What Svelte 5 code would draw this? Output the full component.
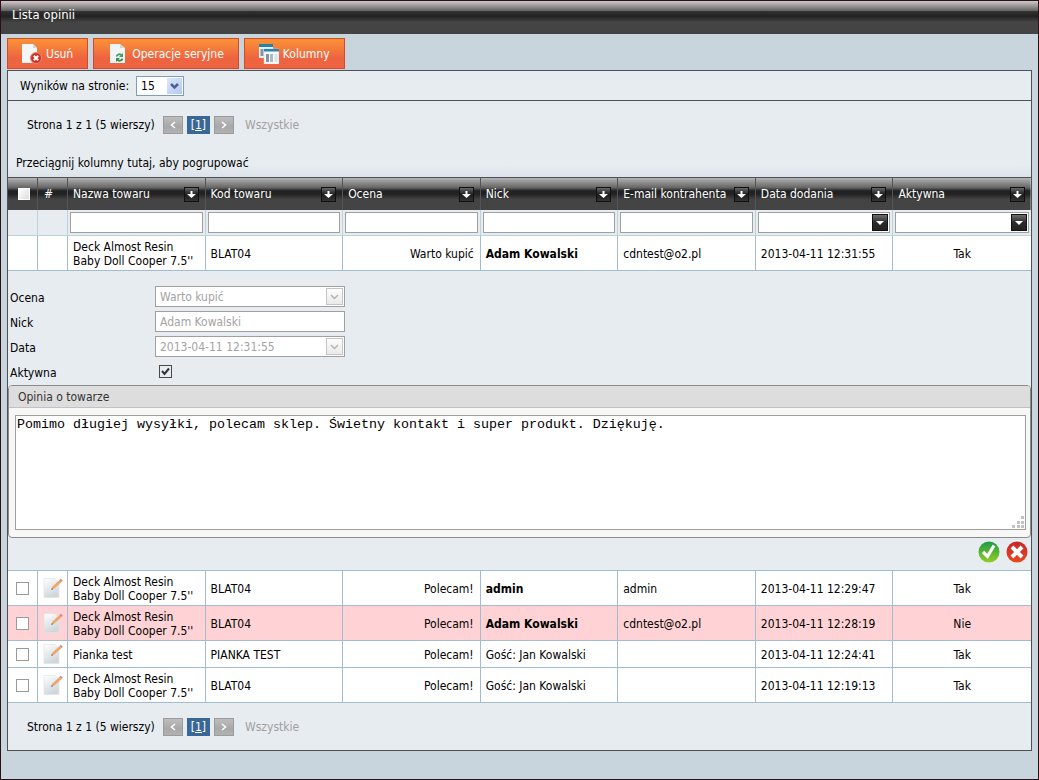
<script lang="ts">
  type Review = {
    id: number;
    product: string;
    code: string;
    rating: string;
    nick: string;
    registered: boolean;
    email: string;
    date: string;
    active: boolean;
  };

  const product = "Deck Almost Resin Baby Doll Cooper 7.5''";

  const reviews: Review[] = [
    { id: 1, product, code: 'BLAT04', rating: 'Warto kupić', nick: 'Adam Kowalski', registered: true, email: 'cdntest@o2.pl', date: '2013-04-11 12:31:55', active: true },
    { id: 2, product, code: 'BLAT04', rating: 'Polecam!', nick: 'admin', registered: true, email: 'admin', date: '2013-04-11 12:29:47', active: true },
    { id: 3, product, code: 'BLAT04', rating: 'Polecam!', nick: 'Adam Kowalski', registered: true, email: 'cdntest@o2.pl', date: '2013-04-11 12:28:19', active: false },
    { id: 4, product: 'Pianka test', code: 'PIANKA TEST', rating: 'Polecam!', nick: 'Gość: Jan Kowalski', registered: false, email: '', date: '2013-04-11 12:24:41', active: true },
    { id: 5, product, code: 'BLAT04', rating: 'Polecam!', nick: 'Gość: Jan Kowalski', registered: false, email: '', date: '2013-04-11 12:19:13', active: true },
  ];

  const columns = [
    { key: 'product', label: 'Nazwa towaru', filter: 'text' },
    { key: 'code', label: 'Kod towaru', filter: 'text' },
    { key: 'rating', label: 'Ocena', filter: 'text' },
    { key: 'nick', label: 'Nick', filter: 'text' },
    { key: 'email', label: 'E-mail kontrahenta', filter: 'text' },
    { key: 'date', label: 'Data dodania', filter: 'list' },
    { key: 'active', label: 'Aktywna', filter: 'list' },
  ];

  let editedId = $state<number | null>(1);
  let selected = $state<number[]>([]);
  let pageSize = $state('15');
  let opinion = $state('Pomimo długiej wysyłki, polecam sklep. Świetny kontakt i super produkt. Dziękuję.');

  function close() {
    editedId = null;
  }
</script>

{#snippet pager()}
  <nav class="pager">
    <span class="summary">Strona 1 z 1 (5 wierszy)</span>
    <button class="step" disabled aria-label="Poprzednia">
      <svg width="8" height="8" viewBox="0 0 8 8"><path d="M6 1 2.5 4 6 7" /></svg>
    </button>
    <a class="current" href="#1">[1]</a>
    <button class="step" disabled aria-label="Następna">
      <svg width="8" height="8" viewBox="0 0 8 8"><path d="M2 1 5.5 4 2 7" /></svg>
    </button>
    <span class="all">Wszystkie</span>
  </nav>
{/snippet}

<main class="window">
  <h1>Lista opinii</h1>

  <div class="toolbar">
    <button>
      <svg width="20" height="20" viewBox="0 0 20 20">
        <path d="M0 0h11l4 4v15H0z" fill="#f4f6f6" />
        <path d="M11 0v4h4z" fill="#cfd5d8" />
        <circle cx="14" cy="14" r="5.5" fill="#cf3425" stroke="#e8877c" />
        <path d="m11.8 11.8 4.4 4.4m0-4.4-4.4 4.4" stroke="#fff" stroke-width="2" />
      </svg>
      Usuń
    </button>
    <button>
      <svg width="20" height="20" viewBox="0 0 20 20">
        <path d="M2 0h10l5 4v15H2z" fill="#f1f4f4" />
        <path d="M12 0v4h5z" fill="#cfd5d8" />
        <path d="M8.5 12.5c.6-2.6 4-3 5.3-1" fill="none" stroke="#4c9a63" stroke-width="1.8" />
        <path d="M15 9v4h-4z" fill="#4c9a63" />
        <path d="M14.5 14.5c-.6 2.6-4 3-5.3 1" fill="none" stroke="#3a8a55" stroke-width="1.8" />
        <path d="M8 18v-4h4z" fill="#3a8a55" />
      </svg>
      Operacje seryjne
    </button>
    <button>
      <svg width="20" height="20" viewBox="0 0 20 20">
        <path d="M0 0h14v14H0z" fill="#e9eff4" />
        <path d="M0 0h14v3H0z" fill="#2481ae" />
        <path d="M1.5 5h3v7h-3zM6 5h2v7H6z" fill="#8297a5" />
        <path d="M5 5h15v15H5z" fill="#f7fafc" stroke="#c3d0d8" stroke-width=".5" />
        <path d="M5 5h15v2.5H5z" fill="#2786b4" />
        <path d="M7 10h3v8H7z" fill="#8495a2" />
        <path d="M11 10h3v8h-3z" fill="#adbac3" />
        <path d="M15.5 10h3v8h-3z" fill="#dbe2e7" />
      </svg>
      Kolumny
    </button>
  </div>

  <section class="panel">
    <div class="page-size">
      <label for="page-size">Wyników na stronie:</label>
      <span class="combo blue">
        <select id="page-size" bind:value={pageSize}>
          <option>15</option>
          <option>30</option>
          <option>50</option>
        </select>
        <svg class="knob" width="15" height="16" viewBox="0 0 15 16"><path d="m4 6 3.5 3.5L11 6" /></svg>
      </span>
    </div>

    {@render pager()}
    <p class="group-hint">Przeciągnij kolumny tutaj, aby pogrupować</p>

    <table>
      <colgroup>
        <col class="narrow" />
        <col class="narrow" />
        {#each columns as column (column.key)}<col />{/each}
      </colgroup>
      <thead>
        <tr class="head">
          <th><input class="check-all" type="checkbox" aria-label="Zaznacz wszystkie" /></th>
          <th class="hash">#</th>
          {#each columns as column (column.key)}
            <th>
              <div class="head-cell">
                <span>{column.label}</span>
                <button class="filter-menu" aria-label="Filtruj: {column.label}">
                  <svg width="9" height="9" viewBox="0 0 9 9"><path d="M3.500 1h2v3H9L4.500 8 0 4h3.500z" /></svg>
                </button>
              </div>
            </th>
          {/each}
        </tr>
        <tr class="filters">
          <td></td>
          <td></td>
          {#each columns as column (column.key)}
            <td>
              {#if column.filter === 'text'}
                <input class="field" type="text" aria-label={column.label} />
              {:else}
                <span class="combo dark">
                  <select aria-label={column.label}><option></option></select>
                  <svg class="knob" width="16" height="17" viewBox="0 0 16 17"><path d="M4 7h8l-4 4z" /></svg>
                </span>
              {/if}
            </td>
          {/each}
        </tr>
      </thead>
      <tbody>
        {#each reviews as review (review.id)}
          {@const edited = review.id === editedId}
          <tr class="row" class:inactive={!review.active}>
            <td class="icon">
              {#if !edited}
                <input type="checkbox" value={review.id} bind:group={selected} aria-label="Zaznacz opinię {review.id}" />
              {/if}
            </td>
            <td class="icon">
              {#if !edited}
                <button class="plain" aria-label="Edytuj" onclick={() => (editedId = review.id)}>
                  <svg width="20" height="20" viewBox="0 0 20 20">
                    <defs>
                      <linearGradient id="sheet-{review.id}" x2="0.4" y2="1">
                        <stop offset="0" stop-color="#fff" />
                        <stop offset="1" stop-color="#d0d7db" />
                      </linearGradient>
                    </defs>
                    <path d="M1 .5h11l4 4v15H1z" fill="url(#sheet-{review.id})" stroke="#e0e4e6" stroke-width=".7" />
                    <path d="m8.5 11.500 1-3 7-6.500 2 2-7 6.500z" fill="#eea669" />
                    <path d="m16.5 2 1.3-1.2 2 2-1.3 1.2z" fill="#cd8290" />
                    <path d="m8.3 11.8.6-1.8 1.300 1.200z" fill="#555" />
                  </svg>
                </button>
              {/if}
            </td>
            <td>{review.product}</td>
            <td>{review.code}</td>
            <td class="right">{review.rating}</td>
            <td class:bold={review.registered}>{review.nick}</td>
            <td>{review.email}</td>
            <td>{review.date}</td>
            <td class="center">{review.active ? 'Tak' : 'Nie'}</td>
          </tr>
          {#if edited}
            <tr class="details">
              <td colspan="9">
                <div class="form">
                  <label for="rating">Ocena</label>
                  <span class="combo grey">
                    <select id="rating" disabled><option>{review.rating}</option></select>
                    <svg class="knob" width="17" height="17" viewBox="0 0 17 17"><path d="m5 7 3.5 3.5L12 7" /></svg>
                  </span>
                  <label for="nick">Nick</label>
                  <input id="nick" class="field" type="text" value={review.nick} disabled />
                  <label for="date">Data</label>
                  <span class="combo grey">
                    <select id="date" disabled><option>{review.date}</option></select>
                    <svg class="knob" width="17" height="17" viewBox="0 0 17 17"><path d="m5 7 3.5 3.5L12 7" /></svg>
                  </span>
                  <label for="active">Aktywna</label>
                  <input id="active" type="checkbox" checked={review.active} />
                </div>
                <div class="opinion">
                  <label for="opinion">Opinia o towarze</label>
                  <div class="opinion-body">
                    <textarea id="opinion" bind:value={opinion}></textarea>
                    <svg class="grip" width="12" height="12" viewBox="0 0 12 12">
                      <path d="M9 0h3v3H9zM5 5h3v3H5zM9 5h3v3H9zM0 9h3v3H0zM5 9h3v3H5zM9 9h3v3H9z" />
                    </svg>
                  </div>
                </div>
                <div class="actions">
                  <button class="plain" aria-label="Zapisz" onclick={close}>
                    <svg width="22" height="22" viewBox="0 0 22 22">
                      <defs>
                        <linearGradient id="ok" x2="0" y2="1">
                          <stop offset="0" stop-color="#1d9a47" />
                          <stop offset="1" stop-color="#93cd25" />
                        </linearGradient>
                      </defs>
                      <circle cx="11" cy="11" r="10.5" fill="url(#ok)" />
                      <path d="m5 11 4.5 4.5 6.5-11" fill="none" stroke="#fff" stroke-width="3.2" />
                    </svg>
                  </button>
                  <button class="plain" aria-label="Anuluj" onclick={close}>
                    <svg width="22" height="22" viewBox="0 0 22 22">
                      <defs>
                        <linearGradient id="cancel" x2="0" y2="1">
                          <stop offset="0" stop-color="#c5262b" />
                          <stop offset="1" stop-color="#ea4a1c" />
                        </linearGradient>
                      </defs>
                      <circle cx="11" cy="11" r="10.5" fill="url(#cancel)" />
                      <path d="m6 6 10 10M16 6 6 16" stroke="#fff" stroke-width="4" />
                    </svg>
                  </button>
                </div>
              </td>
            </tr>
          {/if}
        {/each}
      </tbody>
    </table>

    {@render pager()}
  </section>
</main>

<style>
  :global(body) {
    background: #c8d5dc;
  }

  .window {
    box-sizing: border-box;
    min-height: 100vh;
    border: 1px solid #2c1015;
    background: #c8d5dc;
    color: #000;
    font: 12px/14px 'DejaVu Sans Condensed', Tahoma, sans-serif;
  }
  .window * { box-sizing: border-box; }

  button, input, select { font: inherit; }
  svg { display: block; }

  h1 {
    margin: 0;
    padding: 6px 11px 11px;
    background: linear-gradient(#cfc8cb, #666 29%, #303030 32%, #222 46%, #444 64%, #444);
    color: #fff;
    font-size: 13px;
    font-weight: normal;
    line-height: 16px;
  }

  .toolbar {
    display: flex;
    gap: 5px;
    padding: 4px 6px 1px;
  }
  .toolbar button {
    display: flex;
    align-items: center;
    gap: 4px;
    height: 31px;
    padding: 0 14px;
    border: 1px solid #d4482b;
    background: linear-gradient(#fb9336, #ee6440 65%);
    color: #fff;
  }

  .panel {
    margin: 0 6px 28px;
    border: 1px solid #4e5156;
    background: #e7ecf0;
  }

  .page-size {
    display: flex;
    align-items: center;
    gap: 7px;
    height: 30px;
    padding-left: 12px;
    border-bottom: 1px solid #4e5156;
  }

  .pager {
    display: flex;
    align-items: center;
    gap: 4px;
    height: 47px;
    padding-left: 19px;
  }
  .summary { padding-right: 4px; }
  .step {
    display: grid;
    place-items: center;
    width: 20px;
    height: 18px;
    padding: 0;
    border: 1px solid #9b9b9b;
    background: linear-gradient(#bdbdbd, #a8a8a8 60%, #b2b2b2);
  }
  .step path {
    fill: none;
    stroke: #fff;
    stroke-width: 1.5;
  }
  .current {
    padding: 2px 4px;
    background: #3a6896;
    color: #fff;
  }
  .all {
    margin-left: 7px;
    color: #a0a0a0;
  }

  .group-hint {
    margin: 0;
    padding: 8px 8px 7px;
    background: linear-gradient(#e7ecf0 60%, #dbe3ea);
  }

  table {
    width: 100%;
    border-spacing: 0;
    table-layout: fixed;
  }
  .narrow { width: 30px; }
  th, td {
    padding: 0;
    border-right: 1px solid #a2bdd0;
    border-bottom: 1px solid #a2bdd0;
    text-align: left;
    font-weight: normal;
  }
  th:last-child, td:last-child { border-right: 0; }

  .head { background: linear-gradient(#bbb, #666 32%, #222 42%, #222 52%, #444 68%, #444); }
  .head th {
    height: 33px;
    border-top: 1px solid #4e5156;
    border-bottom: 0;
    border-right-color: #555;
    color: #fff;
  }
  .head .hash { text-align: center; padding-right: 8px; }
  .head-cell {
    display: flex;
    align-items: center;
    justify-content: space-between;
    padding: 0 6px 0 5px;
    white-space: nowrap;
  }
  .filter-menu {
    display: grid;
    place-items: center;
    width: 15px;
    height: 15px;
    padding: 0;
    border: 1px solid #111;
    background: linear-gradient(#666, #1c1c1c 50%, #333);
  }
  .filter-menu path { fill: #fff; }

  .filters td {
    height: 26px;
    padding: 0 2px;
    border-color: #bdd2da;
  }
  .field {
    display: block;
    width: 100%;
    height: 21px;
    padding: 0 4px;
    border: 1px solid #9f9f9f;
    border-radius: 0;
    background: #fff;
  }

  .combo {
    display: inline-grid;
    align-items: center;
  }
  .combo select, .combo .knob { grid-area: 1 / 1; }
  .combo select {
    appearance: none;
    width: 100%;
    height: 21px;
    padding: 0 4px;
    border: 1px solid #9f9f9f;
    border-radius: 0;
    background: #fff;
  }
  .knob {
    justify-self: end;
    margin-right: 2px;
    pointer-events: none;
  }
  .blue select {
    width: 48px;
    height: 20px;
    border-color: #7f9db9;
  }
  .blue .knob { background: linear-gradient(135deg, #dce6fe, #b4c8f6); }
  .blue path {
    fill: none;
    stroke: #4d6185;
    stroke-width: 2.5;
  }
  .dark { display: grid; }
  .dark .knob {
    background: linear-gradient(#777, #2a2a2a 50%, #222);
    outline: 1px solid #111;
    outline-offset: -1px;
  }
  .dark path { fill: #fff; }
  .grey .knob {
    background: linear-gradient(#fff, #e8e8e8);
    outline: 1px solid #c4c4c4;
    outline-offset: -1px;
  }
  .grey path {
    fill: none;
    stroke: #b4b4b4;
    stroke-width: 1.5;
  }
  .form .field:disabled, .form select:disabled {
    color: #a3a3a3;
    opacity: 1;
  }

  .row { background: #fff; }
  .row.inactive { background: #ffd3d5; }
  .row td {
    height: 27px;
    padding: 4px 5px 2px;
  }
  .row td.icon { padding: 3px 4px 3px 5px; }
  .row .right { text-align: right; padding-right: 6px; }
  .row .center { text-align: center; }
  .row .bold { font-weight: bold; }

  input[type='checkbox'] {
    display: block;
    appearance: none;
    width: 13px;
    height: 13px;
    margin: 0 3px;
    border: 1px solid #9a9a9a;
    background: #fff;
  }
  .check-all[type='checkbox'] {
    width: 12px;
    height: 12px;
    margin: 0 10px;
    border-color: #fff;
    background: linear-gradient(135deg, #fff, #ddd);
  }
  .plain {
    display: block;
    padding: 0;
    border: 0;
    background: none;
  }

  .details td { padding: 13px 0 7px; }
  .form {
    display: grid;
    grid-template-columns: 145px 190px;
    grid-auto-rows: 25px;
    align-items: center;
    padding-left: 2px;
  }
  .form label { padding-top: 2px; }
  .form #active {
    margin: 0 4px;
    border-color: #4a4a4a;
    background: #fff;
  }
  .form #active:checked {
    background: url("data:image/svg+xml,%3Csvg xmlns='http://www.w3.org/2000/svg' viewBox='0 0 11 11'%3E%3Cpath d='m2 5 2.5 3L9 2.5' fill='none' stroke='%23333' stroke-width='2'/%3E%3C/svg%3E");
  }

  .opinion {
    border: 1px solid #8a8c8c;
    border-radius: 4px;
    margin-top: 1px;
    background: #f7f7f7;
  }
  .opinion label {
    display: block;
    padding: 4px 9px 3px;
    border-bottom: 1px solid #c2c2c2;
    border-radius: 3px 3px 0 0;
    background: #ddd;
    color: #333;
  }
  .opinion-body {
    display: grid;
    padding: 7px 4px 7px 6px;
  }
  .opinion-body > * { grid-area: 1 / 1; }
  textarea {
    width: 100%;
    height: 115px;
    margin: 0;
    padding: 1px;
    border: 1px solid #a0a096;
    background: #fff;
    font-family: 'Liberation Mono', monospace;
    resize: none;
  }
  .grip {
    place-self: end;
    margin: 2px;
    fill: #c2c2c2;
    pointer-events: none;
  }

  .actions {
    display: flex;
    justify-content: flex-end;
    gap: 6px;
    padding: 3px 3px 0 0;
  }
</style>
